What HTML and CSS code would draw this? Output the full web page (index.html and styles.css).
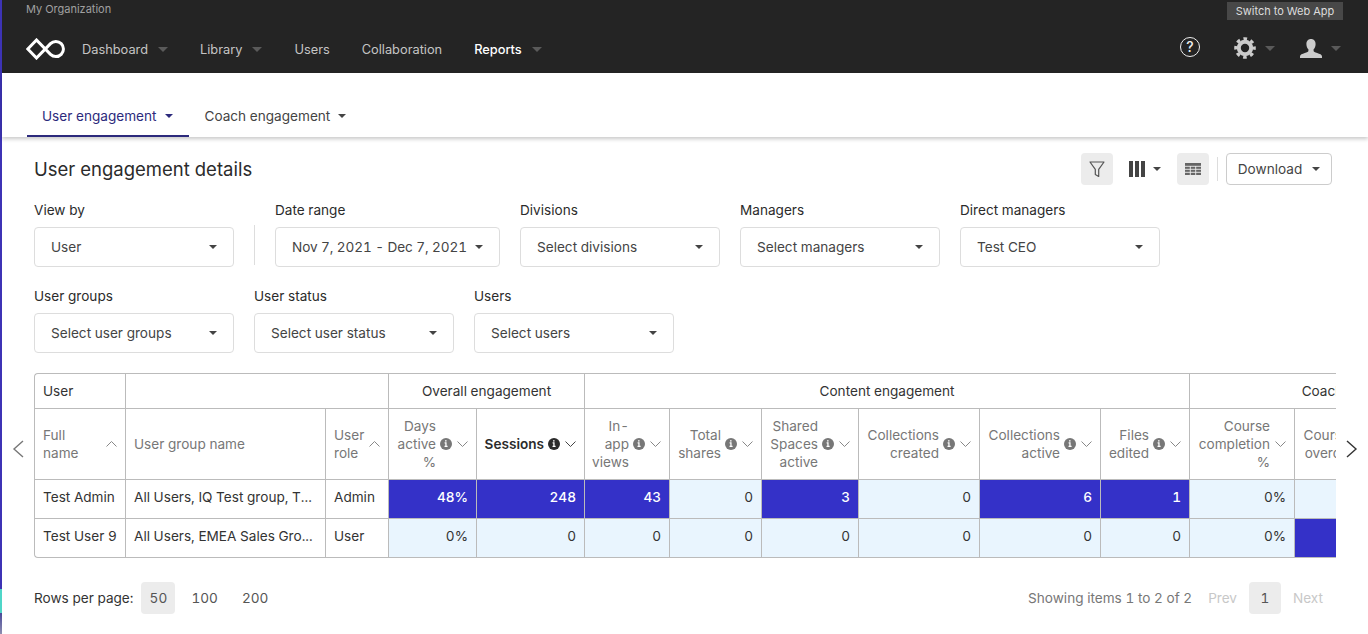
FILE: index.html
```html
<!DOCTYPE html>
<html lang="en">
<head>
<meta charset="utf-8">
<title>User engagement details</title>
<link rel="stylesheet" href="styles.css">
</head>
<body>
<svg class="defs" width="0" height="0" aria-hidden="true">
  <symbol id="info" viewBox="0 0 12 12"><circle cx="6" cy="6" r="6" fill="currentColor"/><path d="M4.6 4.300h2v3.400h1v1.200H4.500V7.700h.8V5.400h-.7z M5 2.200h1.600v1.200H5z" fill="#fff"/></symbol>
  <symbol id="down" viewBox="0 0 11 6"><path d="M.5.5l5 5 5-5" fill="none" stroke="currentColor"/></symbol>
  <symbol id="up" viewBox="0 0 11 6"><path d="M.5 5.500l5-5 5 5" fill="none" stroke="currentColor"/></symbol>
</svg>
<div class="app">
  <div class="rail"></div>
  <div class="main">
    <header class="topbar">
      <div class="org-row">
        <span class="org">My Organization</span>
        <span class="switch">Switch to Web App</span>
      </div>
      <nav class="nav-row">
        <svg class="logo" width="40" height="22" viewBox="0 0 40 22"><path d="M10.500 20L24.500 5.600A7.600 7.600 0 1 1 24.500 16.400L10.500 2L1.800 11z" fill="none" stroke="#fff" stroke-width="3"/></svg>
        <a class="nav-item">Dashboard<i class="caret-nav"></i></a>
        <a class="nav-item">Library<i class="caret-nav"></i></a>
        <a class="nav-item">Users</a>
        <a class="nav-item">Collaboration</a>
        <a class="nav-item active">Reports<i class="caret-nav"></i></a>
        <div class="nav-right">
          <span class="help">?</span>
          <span class="nav-icon gear-wrap">
            <svg width="22" height="22" viewBox="0 0 22 22"><circle cx="11" cy="11" r="6.200" fill="none" stroke="#ccc" stroke-width="4"/><circle cx="11" cy="11" r="9.300" fill="none" stroke="#ccc" stroke-width="3" stroke-dasharray="3.650 3.650" stroke-dashoffset="1.820"/></svg>
            <i class="caret-nav"></i>
          </span>
          <span class="nav-icon user-wrap">
            <svg width="22" height="19" viewBox="0 0 22 19"><path d="M11 0c3 0 4.600 2.200 4.600 5.200 0 2.200-.9 4-2 5.100v1.600c0 .9 1.300 1.300 3.600 2.200 2.500 1 4.800 1.500 4.800 3.400V19H0v-1.500c0-1.900 2.300-2.400 4.800-3.400 2.300-.9 3.600-1.300 3.600-2.200v-1.600c-1.100-1.100-2-2.900-2-5.100C6.400 2.200 8 0 11 0z" fill="#ccc"/></svg>
            <i class="caret-nav"></i>
          </span>
        </div>
      </nav>
    </header>

    <div class="tabs">
      <a class="tab tab-active">User engagement<i class="caret"></i></a>
      <a class="tab">Coach engagement<i class="caret"></i></a>
    </div>

    <section class="content">
      <div class="toolbar">
        <h1 class="title">User engagement details</h1>
        <div class="tools">
          <button class="tool-btn tool-on">
            <svg width="16" height="17" viewBox="0 0 16 17"><path d="M1 1h14L9.700 8.300V15.500L6.300 13.500V8.300z" fill="none" stroke="#555" stroke-width="1.200" stroke-linejoin="round"/></svg>
          </button>
          <button class="tool-cols">
            <svg width="16" height="16" viewBox="0 0 16 16"><path d="M0 0h4v16H0zM6 0h4v16H6zM12 0h4v16h-4z" fill="#444"/></svg>
            <i class="caret"></i>
          </button>
          <button class="tool-btn tool-on">
            <svg width="16" height="12" viewBox="0 0 16 12"><path d="M0 0h16v12H0z" fill="#666"/><path d="M0 3.300h16M0 6.300h16M0 9.300h16M5.300 3v9M10.700 3v9" stroke="#eee" stroke-width=".9"/></svg>
          </button>
          <span class="tool-sep"></span>
          <button class="download">Download<i class="caret"></i></button>
        </div>
      </div>

      <div class="filters">
        <label class="field"><span class="field-label">View by</span><span class="select">User<i class="caret"></i></span></label>
        <span class="filter-sep"></span>
        <label class="field field-date"><span class="field-label">Date range</span><span class="select select-date">Nov 7, 2021 - Dec 7, 2021<i class="caret"></i></span></label>
        <label class="field"><span class="field-label">Divisions</span><span class="select">Select divisions<i class="caret"></i></span></label>
        <label class="field"><span class="field-label">Managers</span><span class="select">Select managers<i class="caret"></i></span></label>
        <label class="field"><span class="field-label">Direct managers</span><span class="select">Test CEO<i class="caret"></i></span></label>
      </div>
      <div class="filters filters-second">
        <label class="field"><span class="field-label">User groups</span><span class="select">Select user groups<i class="caret"></i></span></label>
        <label class="field"><span class="field-label">User status</span><span class="select">Select user status<i class="caret"></i></span></label>
        <label class="field"><span class="field-label">Users</span><span class="select">Select users<i class="caret"></i></span></label>
      </div>

      <div class="table-area">
        <svg class="pager pager-left" width="12" height="18" viewBox="0 0 12 18"><path d="M11 1L2 9l9 8" fill="none" stroke="#777" stroke-width="1.400"/></svg>
        <div class="table-wrap">
          <table class="grid">
            <colgroup>
              <col class="c91"><col class="c200"><col class="c63"><col class="c88"><col class="c108"><col class="c85"><col class="c92"><col class="c97"><col class="c121"><col class="c121"><col class="c89"><col class="c105"><col class="c103"><col class="c142">
            </colgroup>
            <thead>
              <tr class="group-row">
                <th class="group-left">User</th>
                <th colspan="2"></th>
                <th colspan="2">Overall engagement</th>
                <th colspan="6">Content engagement</th>
                <th colspan="3">Coach engagement</th>
              </tr>
              <tr class="head-row">
                <th><div class="head head-left"><span>Full<br>name</span><svg class="chev"><use href="#up"/></svg></div></th>
                <th><div class="head head-left"><span>User group name</span></div></th>
                <th><div class="head head-left"><span>User<br>role</span><svg class="chev"><use href="#up"/></svg></div></th>
                <th><div class="head"><span>Days<br>active<br>%</span><svg class="inf"><use href="#info"/></svg><svg class="chev"><use href="#down"/></svg></div></th>
                <th><div class="head head-sorted"><span>Sessions</span><svg class="inf"><use href="#info"/></svg><svg class="chev"><use href="#down"/></svg></div></th>
                <th><div class="head"><span>In-<br>app<br>views</span><svg class="inf"><use href="#info"/></svg><svg class="chev"><use href="#down"/></svg></div></th>
                <th><div class="head"><span>Total<br>shares</span><svg class="inf"><use href="#info"/></svg><svg class="chev"><use href="#down"/></svg></div></th>
                <th><div class="head"><span>Shared<br>Spaces<br>active</span><svg class="inf"><use href="#info"/></svg><svg class="chev"><use href="#down"/></svg></div></th>
                <th><div class="head"><span>Collections<br>created</span><svg class="inf"><use href="#info"/></svg><svg class="chev"><use href="#down"/></svg></div></th>
                <th><div class="head"><span>Collections<br>active</span><svg class="inf"><use href="#info"/></svg><svg class="chev"><use href="#down"/></svg></div></th>
                <th><div class="head"><span>Files<br>edited</span><svg class="inf"><use href="#info"/></svg><svg class="chev"><use href="#down"/></svg></div></th>
                <th><div class="head"><span>Course<br>completion<br>%</span><svg class="chev"><use href="#down"/></svg></div></th>
                <th><div class="head"><span>Courses<br>overdue</span><svg class="inf"><use href="#info"/></svg><svg class="chev"><use href="#down"/></svg></div></th>
                <th></th>
              </tr>
            </thead>
            <tbody>
              <tr>
                <td>Test Admin</td><td class="clip">All Users, IQ Test group, T...</td><td>Admin</td>
                <td class="hi">48%</td><td class="hi">248</td><td class="hi">43</td><td class="lo">0</td><td class="hi">3</td><td class="lo">0</td><td class="hi">6</td><td class="hi">1</td><td class="lo">0%</td><td class="lo">0</td><td class="lo">0</td>
              </tr>
              <tr class="last">
                <td>Test User 9</td><td class="clip">All Users, EMEA Sales Gro...</td><td>User</td>
                <td class="lo">0%</td><td class="lo">0</td><td class="lo">0</td><td class="lo">0</td><td class="lo">0</td><td class="lo">0</td><td class="lo">0</td><td class="lo">0</td><td class="lo">0%</td><td class="hi">1</td><td class="hi">1</td>
              </tr>
            </tbody>
          </table>
        </div>
        <svg class="pager pager-right" width="12" height="18" viewBox="0 0 12 18"><path d="M1 1l9 8-9 8" fill="none" stroke="#333" stroke-width="1.400"/></svg>
      </div>

      <div class="footer">
        <div class="rows">
          <span class="rows-label">Rows per page:</span>
          <button class="page-btn page-on">50</button>
          <button class="page-btn">100</button>
          <button class="page-btn">200</button>
        </div>
        <div class="paging">
          <span class="showing">Showing items 1 to 2 of 2</span>
          <span class="page-off">Prev</span>
          <button class="page-btn page-on page-num">1</button>
          <span class="page-off page-next">Next</span>
        </div>
      </div>
    </section>
  </div>
</div>
</body>
</html>
```

FILE: styles.css
```css
* { box-sizing: border-box; }
html, body { margin: 0; height: 634px; overflow: hidden; background: #fff; }
body { font-family: Inter, "Liberation Sans", sans-serif; font-size: 13.6px; font-variant-numeric: tabular-nums; color: #333; }
.defs { position: absolute; }
button { font: inherit; border: 0; background: none; color: inherit; padding: 0; }
.app { display: flex; height: 634px; }
.rail { width: 2px; flex: none; background: linear-gradient(to bottom, #3d33b5 0, #3d33b5 589px, #4fd6c8 589px, #4fd6c8 613px, #4a4a9a 613px, #8d8db0 634px); }
.main { flex: 1; min-width: 0; }

.topbar { height: 73px; background: #242424; }
.org-row { height: 20px; padding: 2px 25px 0 24px; display: flex; justify-content: space-between; align-items: flex-start; }
.org { font-size: 11px; line-height: 14px; color: #a0a0a0; }
.switch { height: 18px; width: 116px; background: #484848; color: #ddd; font-size: 11px; line-height: 18px; text-align: center; }
.nav-row { height: 53px; padding: 5px 27px 0 24px; display: flex; align-items: center; }
.logo { flex: none; margin-right: 16px; }
.nav-item { display: flex; align-items: center; font-size: 12.8px; color: #c4c4c4; margin-right: 32px; }
.nav-item.active { color: #fff; font-weight: 500; }
.caret-nav { display: block; margin-left: 10px; border-top: 5px solid #5a5a5a; border-left: 5px solid transparent; border-right: 5px solid transparent; }
.nav-right { margin-left: auto; display: flex; align-items: center; }
.help { width: 20px; height: 20px; border: 1.5px solid #eee; border-radius: 50%; color: #eee; font-size: 14px; font-weight: 500; line-height: 17px; text-align: center; margin-right: 34px; margin-top: -4px; }
.nav-icon { display: flex; align-items: center; margin-top: -2px; }
.gear-wrap { margin-right: 25px; }
.gear-wrap .caret-nav { margin-left: 9px; }
.user-wrap .caret-nav { margin-left: 9px; }

.tabs { height: 64px; padding: 0 0 0 25px; display: flex; align-items: flex-end; background: #fff; box-shadow: 0 2px 4px rgba(0,0,0,.22); position: relative; }
.tab { height: 42px; padding: 1px 16px 0 15px; display: flex; align-items: center; color: #444; border-bottom: 2px solid transparent; }
.tab + .tab { padding-left: 16px; }
.tab .caret { margin-left: 8px; }
.tab-active { color: #2c2a7c; border-bottom-color: #2c2a7c; }
.caret { display: block; flex: none; border-top: 4px solid currentColor; border-left: 4px solid transparent; border-right: 4px solid transparent; }

.content { padding: 16px 32px 0; }
.toolbar { height: 32px; display: flex; justify-content: space-between; align-items: center; padding-right: 4px; }
.title { margin: 0; font-size: 18.5px; font-weight: 400; color: #2b2b2b; }
.tools { display: flex; align-items: center; }
.tool-btn { width: 32px; height: 32px; border-radius: 4px; display: flex; align-items: center; justify-content: center; }
.tool-on { background: #ececec; }
.tool-cols { display: flex; align-items: center; margin: 0 16px; color: #444; }
.tool-cols .caret { margin-left: 8px; }
.tool-sep { width: 1px; height: 24px; background: #ddd; margin: 0 8px; }
.download { width: 106px; height: 32px; padding-bottom: 1px; border: 1px solid #ccc; border-radius: 4px; display: flex; align-items: center; justify-content: center; color: #444; }
.download .caret { margin-left: 10px; }

.filters { display: flex; margin-top: 15px; }
.filters-second { margin-top: 19px; }
.field { display: block; width: 200px; margin-right: 20px; }
.field-date { width: 225px; }
.field-label { display: block; height: 20px; line-height: 20px; margin-bottom: 7px; color: #2b2b2b; }
.select { height: 40px; padding: 0 16px 1px; display: flex; align-items: center; justify-content: space-between; border: 1px solid #ddd; border-radius: 4px; color: #444; white-space: nowrap; }
.select-date { letter-spacing: -.1px; }
.filter-sep { width: 1px; height: 40px; background: #ddd; margin: 25px 20px 0 0; }

.table-area { position: relative; margin-top: 20px; }
.table-wrap { border: 1px solid #bbb; border-right: 0; border-radius: 4px 0 0 4px; overflow: hidden; height: 185px; }
.grid { border-collapse: separate; border-spacing: 0; table-layout: fixed; width: 1505px; }
.c91 { width: 91px; } .c200 { width: 200px; } .c63 { width: 63px; } .c88 { width: 88px; } .c108 { width: 108px; }
.c85 { width: 85px; } .c92 { width: 92px; } .c97 { width: 97px; } .c121 { width: 121px; } .c89 { width: 89px; }
.c105 { width: 105px; } .c103 { width: 103px; } .c142 { width: 142px; }
.grid th, .grid td { border-right: 1px solid #bbb; border-bottom: 1px solid #bbb; padding: 0; font-weight: 400; }
.group-row th { height: 35px; padding-bottom: 1px; color: #333; text-align: center; }
.group-row .group-left { text-align: left; padding-left: 8px; }
.head-row th { height: 71px; }
.head { display: flex; justify-content: flex-end; align-items: center; padding: 0 8px; color: #777; line-height: 18px; text-align: right; }
.head-left { justify-content: space-between; text-align: left; }
.head-sorted { color: #2b2b2b; font-weight: 600; }
.inf { width: 12px; height: 12px; margin-left: 4px; flex: none; }
.chev { width: 11px; height: 6px; margin-left: 5px; flex: none; color: #888; }
.head-sorted .chev { color: #444; }
.grid td { height: 39px; padding: 0 8px 5px; white-space: nowrap; overflow: hidden; color: #333; }
.grid td.hi, .grid td.lo { text-align: right; padding-right: 8px; }
.grid td.hi { background: #3431c8; color: #fff; font-weight: 500; }
.grid td.lo { background: #e9f5fe; }
.grid .last td { border-bottom: 0; height: 38px; }
.pager { position: absolute; top: 67px; }
.pager-left { left: -22px; }
.pager-right { left: 1312px; }

.footer { margin: 24px 4px 0 0; height: 32px; display: flex; justify-content: space-between; align-items: center; }
.rows, .paging { display: flex; align-items: center; }
.rows-label { margin-right: 8px; }
.page-btn { height: 32px; min-width: 34px; padding: 0 8px; border-radius: 4px; color: #555; margin-right: 8px; }
.page-on { background: #ececec; }
.showing { color: #777; margin-right: 16px; }
.page-off { color: #c8c8c8; }
.page-num { min-width: 32px; margin: 0 12px; }
.page-next { margin-right: 9px; }
```
